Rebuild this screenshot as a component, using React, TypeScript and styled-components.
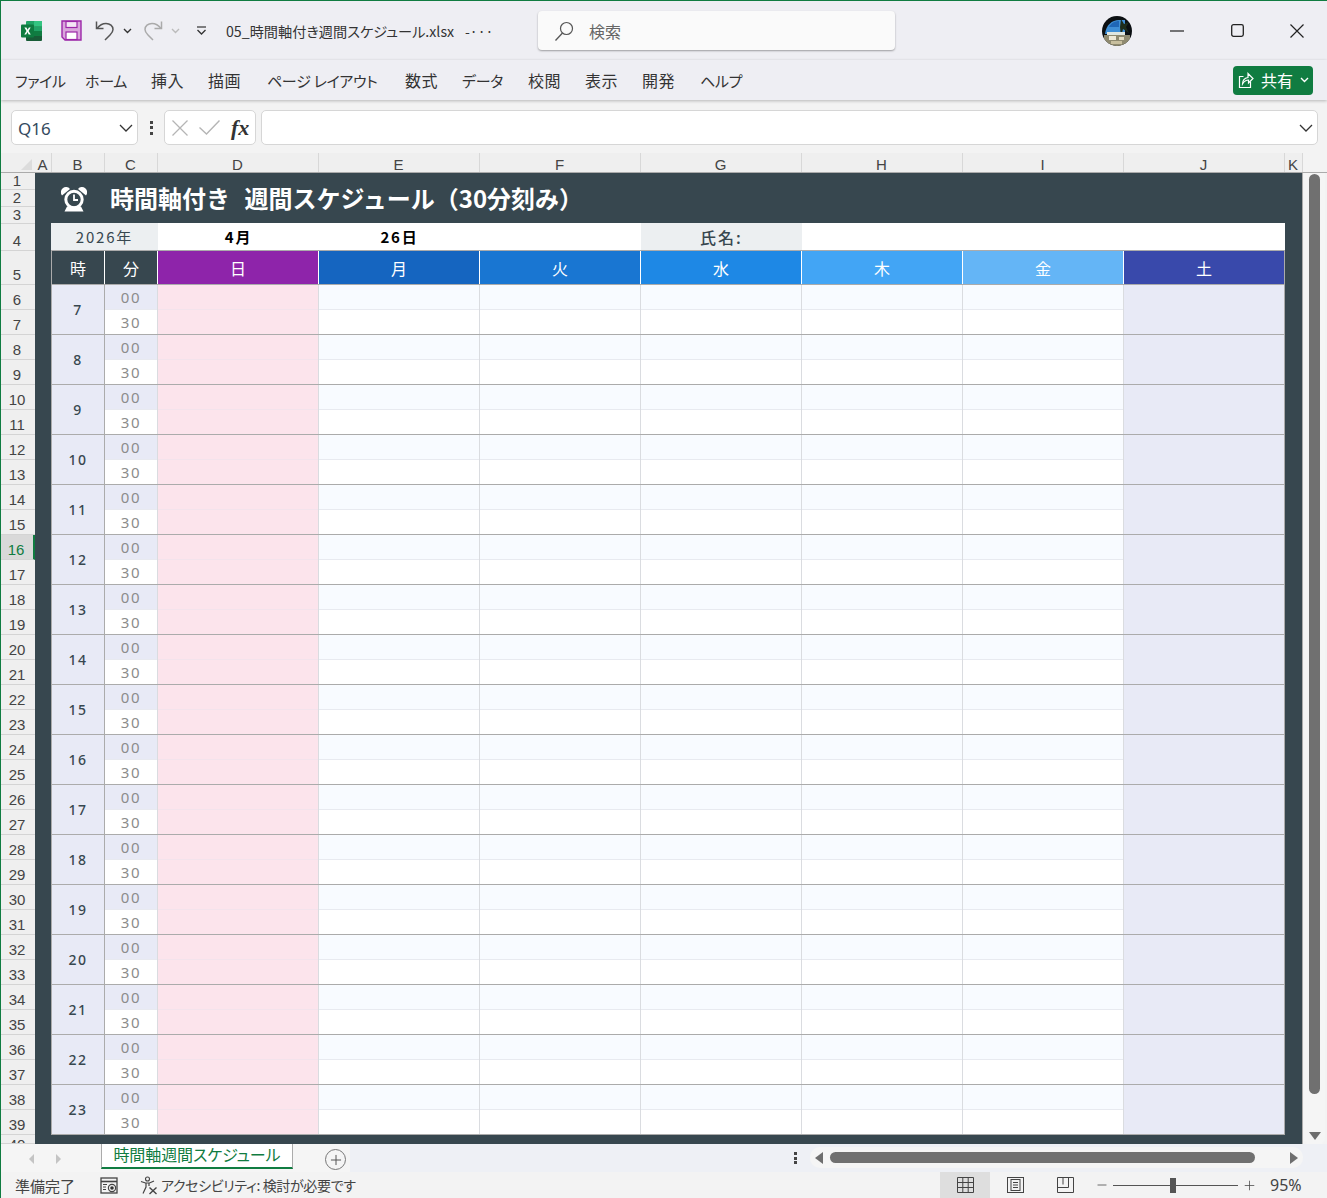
import styled, { createGlobalStyle } from "styled-components";
import { Minus, Plus } from "lucide-react";

const JP = `"Noto Sans CJK JP", "Noto Sans", sans-serif`;
const COLS = "54px 53px repeat(7, 161px)";

const GlobalStyle = createGlobalStyle`
  * { box-sizing: border-box; }
  html, body { margin: 0; padding: 0; background: #f3f3f3; }
  body { font-family: ${JP}; font-feature-settings: "palt"; }
`;

const columns = [
  { name: "A", width: 17 },
  { name: "B", width: 53 },
  { name: "C", width: 53 },
  { name: "D", width: 161 },
  { name: "E", width: 161 },
  { name: "F", width: 161 },
  { name: "G", width: 161 },
  { name: "H", width: 161 },
  { name: "I", width: 161 },
  { name: "J", width: 161 },
  { name: "K", width: 18 },
];

const days = [
  { label: "日", color: "#8e24aa" },
  { label: "月", color: "#1565c0" },
  { label: "火", color: "#1976d2" },
  { label: "水", color: "#1e88e5" },
  { label: "木", color: "#42a5f5" },
  { label: "金", color: "#64b5f6" },
  { label: "土", color: "#3949ab" },
];

const menus = [
  { label: "ファイル", width: 70, kana: true },
  { label: "ホーム", width: 66, kana: true },
  { label: "挿入", width: 57 },
  { label: "描画", width: 59 },
  { label: "ページ レイアウト", width: 138, kana: true },
  { label: "数式", width: 57 },
  { label: "データ", width: 66, kana: true },
  { label: "校閲", width: 57 },
  { label: "表示", width: 57 },
  { label: "開発", width: 58 },
  { label: "ヘルプ", width: 60, kana: true },
];

const hours = Array.from({ length: 17 }, (_, i) => i + 7);

const rowHeights = [17, 17, 17, 27, 34, ...Array.from({ length: 34 }, () => 25), 9];

const ExcelLogo = () => (
  <svg width="21" height="20" viewBox="0 0 21 20">
    <path d="M6 0h14a1 1 0 0 1 1 1v4.500H5V1a1 1 0 0 1 1-1z" fill="#21a366" />
    <rect x="13" y="0" width="8" height="5.500" rx="1" fill="#33c481" />
    <rect x="5" y="5.500" width="16" height="4.500" fill="#107c41" />
    <rect x="13" y="5.500" width="8" height="4.500" fill="#21a366" />
    <rect x="5" y="10" width="16" height="5" fill="#185c37" />
    <rect x="13" y="10" width="8" height="5" fill="#107c41" />
    <path d="M5 15h16v4a1 1 0 0 1-1 1H6a1 1 0 0 1-1-1z" fill="#185c37" />
    <rect x="0" y="3.500" width="13" height="13" rx="1" fill="#0f7b40" />
    <path d="M3.400 6.500h2l1.200 2.300 1.300-2.300h1.800l-2.100 3.500 2.200 3.500H7.700l-1.200-2.400-1.300 2.400H3.300l2.200-3.500z" fill="#fff" />
  </svg>
);

const SaveIcon = () => (
  <svg width="21" height="21" viewBox="0 0 21 21">
    <path d="M1 1h19v19H4l-3-3z" fill="#d9a6dc" stroke="#9c27a8" strokeWidth="1.400" />
    <rect x="5" y="1.500" width="11" height="6" fill="#f4e6f5" stroke="#9c27a8" strokeWidth="1.200" />
    <rect x="5" y="12" width="11" height="7.500" fill="#fff" stroke="#9c27a8" strokeWidth="1.200" />
  </svg>
);

const UndoIcon = ({ color, flip }: { color: string; flip?: boolean }) => (
  <svg width="20" height="21" viewBox="0 0 20 21" style={flip ? { transform: "scaleX(-1)" } : undefined}>
    <path d="M1.500 1.500v7h7" fill="none" stroke={color} strokeWidth="1.500" />
    <path d="M2 8.500C5 4.500 8 3.500 11 3.500c4 0 7 2.500 7 6 0 2.500-1.500 4-3 5.500l-5 5" fill="none" stroke={color} strokeWidth="1.500" />
  </svg>
);

const SmallChevron = ({ color }: { color: string }) => (
  <svg width="9" height="6" viewBox="0 0 9 6">
    <path d="M1 1l3.500 3.500L8 1" fill="none" stroke={color} strokeWidth="1.400" />
  </svg>
);

const BoxChevron = () => (
  <svg width="14" height="8" viewBox="0 0 14 8">
    <path d="M1 1l6 6 6-6" fill="none" stroke="#333" strokeWidth="1.300" />
  </svg>
);

const QatMore = () => (
  <svg width="11" height="10" viewBox="0 0 11 10">
    <path d="M1 1h9" stroke="#333" strokeWidth="1.200" />
    <path d="M1.500 4l4 4 4-4" fill="none" stroke="#333" strokeWidth="1.300" />
  </svg>
);

const LensIcon = () => (
  <svg width="20" height="20" viewBox="0 0 20 20">
    <circle cx="12.500" cy="7.500" r="6" fill="none" stroke="#555" strokeWidth="1.200" />
    <path d="M8.500 12L1.500 19.500" fill="none" stroke="#555" strokeWidth="1.300" />
  </svg>
);

const Avatar = () => (
  <svg width="30" height="30" viewBox="0 0 30 30">
    <defs>
      <clipPath id="avatarClip">
        <circle cx="15" cy="15" r="15" />
      </clipPath>
    </defs>
    <g clipPath="url(#avatarClip)">
      <rect width="30" height="30" fill="#0b0f12" />
      <path d="M3 18C4 9 10 4 17 4h6v14z" fill="#3f8fd6" />
      <path d="M7 11c2-4 6-6 10-6v6z" fill="#1f66b5" />
      <path d="M19 3l3 5 5-2-3 5 3 6-6-4-2 8-1-10z" fill="#1e2d1c" />
      <rect x="5" y="16" width="18" height="3" fill="#dfe6e0" />
      <rect x="2" y="19" width="26" height="11" fill="#8f8a70" />
      <rect x="7" y="20" width="7" height="4" fill="#efe9d7" />
      <rect x="17" y="21" width="5" height="3" fill="#e4dcc2" />
      <rect x="9" y="25" width="11" height="3" fill="#c8bf9f" />
    </g>
  </svg>
);

const MinimizeIcon = () => (
  <svg width="14" height="14" viewBox="0 0 14 14">
    <path d="M0 7h14" stroke="#222" strokeWidth="1.200" />
  </svg>
);

const MaximizeIcon = () => (
  <svg width="13" height="13" viewBox="0 0 13 13">
    <rect x=".7" y=".7" width="11.600" height="11.600" rx="1.800" fill="none" stroke="#222" strokeWidth="1.300" />
  </svg>
);

const CloseIcon = () => (
  <svg width="14" height="14" viewBox="0 0 14 14">
    <path d="M.5.500l13 13M13.500.500l-13 13" stroke="#222" strokeWidth="1.200" />
  </svg>
);

const CrossIcon = () => (
  <svg width="16" height="16" viewBox="0 0 16 16">
    <path d="M.5.500l15 15M15.500.500l-15 15" stroke="#b5b5b5" strokeWidth="1.300" />
  </svg>
);

const CheckIcon = () => (
  <svg width="21" height="15" viewBox="0 0 21 15">
    <path d="M.5 7.500l7 6.500L20.500.500" fill="none" stroke="#b5b5b5" strokeWidth="1.400" />
  </svg>
);

const ShareIcon = () => (
  <svg width="16" height="17" viewBox="0 0 16 17">
    <path d="M5.500 4.500H1.500v11h11v-6" fill="none" stroke="#fff" strokeWidth="1.200" />
    <path d="M4.500 12c0-4 2.500-6 5.500-6.500V1.500L15 6.500l-4.500 4.500V8C8 8 6 9.500 4.500 12z" fill="none" stroke="#fff" strokeWidth="1.200" />
  </svg>
);

const AlarmIcon = () => (
  <svg width="26" height="26" viewBox="0 0 26 26">
    <path d="M1 9.500a5 5 0 0 1 8-6.500zM25 9.500a5 5 0 0 0-8-6.500z" fill="#fff" />
    <circle cx="13" cy="13.500" r="8.200" fill="none" stroke="#fff" strokeWidth="3" />
    <path d="M13 8.500v5.500h4" fill="none" stroke="#fff" strokeWidth="1.800" />
    <path d="M6 20.500L3.500 25.500h19L20 20.500z" fill="#fff" />
  </svg>
);

const MacroIcon = () => (
  <svg width="18" height="17" viewBox="0 0 18 17">
    <rect x="1" y="1" width="16" height="15" fill="none" stroke="#444" strokeWidth="1.300" />
    <path d="M1 4.500h16" stroke="#444" strokeWidth="1.600" />
    <path d="M3 7.500h4M3 10h3M3 12.500h3" stroke="#444" strokeWidth="1" />
    <circle cx="12" cy="11" r="3.600" fill="#f3f3f3" stroke="#444" strokeWidth="1.200" />
    <circle cx="12" cy="11" r="1.800" fill="#333" />
  </svg>
);

const AccessIcon = () => (
  <svg width="18" height="19" viewBox="0 0 18 19">
    <circle cx="7.500" cy="3" r="2" fill="none" stroke="#444" strokeWidth="1.100" />
    <path d="M1 5.500l4.500 1.500h4L14 5M6 7v4l-3 6.500M9 7v3" fill="none" stroke="#444" strokeWidth="1.200" />
    <path d="M9.500 11.500l7 6.500M16.500 11.500l-7 6.500" fill="none" stroke="#444" strokeWidth="1.400" />
  </svg>
);

const NormalViewIcon = () => (
  <svg width="17" height="16" viewBox="0 0 17 16">
    <path d="M.5.500h16v15H.5zM.5 5.500h16M.5 10.500h16M5.800.500v15M11.200.500v15" fill="none" stroke="#444" strokeWidth="1" />
  </svg>
);

const PageViewIcon = () => (
  <svg width="17" height="16" viewBox="0 0 17 16">
    <rect x=".5" y=".5" width="16" height="15" fill="none" stroke="#444" />
    <rect x="4" y="2.500" width="9" height="11" fill="none" stroke="#444" />
    <path d="M6 5.500h5M6 8h5M6 10.500h5" stroke="#444" />
  </svg>
);

const BreakViewIcon = () => (
  <svg width="17" height="16" viewBox="0 0 17 16">
    <path d="M.5.500h16v15H.5zM.5 10.500h11V.500M6 .500v7" fill="none" stroke="#444" />
  </svg>
);

const App = () => {
  return (
    <Win>
      <GlobalStyle />
      <TitleBar>
        <QatGroup>
          <QatSlot $w={38}><ExcelLogo /></QatSlot>
          <QatSlot $w={42}><SaveIcon /></QatSlot>
          <QatSlot $w={26}><UndoIcon color="#555" /></QatSlot>
          <QatSlot $w={18}><SmallChevron color="#333" /></QatSlot>
          <QatSlot $w={34}><UndoIcon color="#aaa" flip /></QatSlot>
          <QatSlot $w={10}><SmallChevron color="#bbb" /></QatSlot>
          <QatSlot $w={42}><QatMore /></QatSlot>
        </QatGroup>
        <FileName>05_時間軸付き週間スケジュール.xlsx</FileName>
        <FileMore>-···</FileMore>
        <SearchBox>
          <LensIcon />
          <SearchText>検索</SearchText>
        </SearchBox>
        <WindowControls>
          <Avatar />
          <WinButton $ml={15}><MinimizeIcon /></WinButton>
          <WinButton $ml={0}><MaximizeIcon /></WinButton>
          <WinButton $ml={0}><CloseIcon /></WinButton>
        </WindowControls>
      </TitleBar>

      <MenuBar>
        <MenuList>
          {menus.map((m) => (
            <MenuItem key={m.label} $w={m.width} $kana={m.kana}>{m.label}</MenuItem>
          ))}
        </MenuList>
        <ShareButton>
          <ShareIcon />
          <span>共有</span>
          <SmallChevron color="#fff" />
        </ShareButton>
      </MenuBar>

      <FormulaBar>
        <NameBox>
          <NameText>Q16</NameText>
          <BoxChevron />
        </NameBox>
        <DotsV $h={14}>
          <i /><i /><i />
        </DotsV>
        <FxBox>
          <CrossIcon />
          <CheckIcon />
          <FxText>fx</FxText>
        </FxBox>
        <FormulaInput>
          <BoxChevron />
        </FormulaInput>
      </FormulaBar>

      <ColHeader>
        <Corner />
        {columns.map((c) => (
          <ColCell key={c.name} $w={c.width}>{c.name}</ColCell>
        ))}
        <ColHeadGap />
      </ColHeader>

      <SheetArea>
        <RowHeader>
          {rowHeights.map((h, i) => (
            <RowCell key={i} $h={h} $active={i + 1 === 16}>{i + 1}</RowCell>
          ))}
        </RowHeader>

        <Sheet>
          <SheetTitle>
            <AlarmIcon />
            <TitleText>時間軸付き 週間スケジュール（30分刻み）</TitleText>
          </SheetTitle>

          <InfoRow>
            <YearCell>2026年</YearCell>
            <InfoValue>4月</InfoValue>
            <InfoValue>26日</InfoValue>
            <InfoValue />
            <NameLabel>氏名:</NameLabel>
            <InfoValue />
            <InfoValue />
            <InfoValue />
          </InfoRow>

          <Table>
            <HeadRow>
              <HeadCell $bg="#37474f">時</HeadCell>
              <HeadCell $bg="#37474f">分</HeadCell>
              {days.map((d) => (
                <HeadCell key={d.label} $bg={d.color}>{d.label}</HeadCell>
              ))}
            </HeadRow>
            {hours.map((h) => (
              <HourRow key={h}>
                <HourCell>{h}</HourCell>
                <MinuteCol>
                  <MinuteCell $first>00</MinuteCell>
                  <MinuteCell>30</MinuteCell>
                </MinuteCol>
                <SunCol>
                  <SunHalf />
                  <SunHalf />
                </SunCol>
                {[0, 1, 2, 3, 4].map((d) => (
                  <DayCol key={d}>
                    <DayHalf $first />
                    <DayHalf />
                  </DayCol>
                ))}
                <SatCol />
              </HourRow>
            ))}
          </Table>
        </Sheet>

        <VScroll>
          <ArrowUp />
          <VThumb />
          <ArrowDown />
        </VScroll>
      </SheetArea>

      <TabBar>
        <TabNav>
          <NavLeft />
          <NavRight />
        </TabNav>
        <Tab>時間軸週間スケジュール</Tab>
        <AddSheet>
          <Plus size={16} strokeWidth={1.500} color="#555" />
        </AddSheet>
        <TabFill />
        <DotsV $h={12}>
          <i /><i /><i />
        </DotsV>
        <HScroll>
          <ArrowLeft />
          <HThumb />
          <ArrowRight />
        </HScroll>
      </TabBar>

      <StatusBar>
        <StatusText>準備完了</StatusText>
        <StatusIcon><MacroIcon /></StatusIcon>
        <AccessWrap>
          <AccessIcon />
          <AccessText>アクセシビリティ: 検討が必要です</AccessText>
        </AccessWrap>
        <StatusFill />
        <ViewButton $active><NormalViewIcon /></ViewButton>
        <ViewButton><PageViewIcon /></ViewButton>
        <ViewButton><BreakViewIcon /></ViewButton>
        <ZoomSign><Minus size={14} strokeWidth={1.300} color="#444" /></ZoomSign>
        <ZoomTrack>
          <ZoomKnob />
        </ZoomTrack>
        <ZoomSign><Plus size={15} strokeWidth={1.200} color="#444" /></ZoomSign>
        <ZoomValue>95%</ZoomValue>
      </StatusBar>
    </Win>
  );
};

export default App;

const Win = styled.div`
  width: 1327px;
  height: 1198px;
  display: flex;
  flex-direction: column;
  border-top: 1px solid #107c41;
  border-left: 1px solid #107c41;
  background: #f3f3f3;
  overflow: hidden;
`;

const TitleBar = styled.div`
  height: 59px;
  display: flex;
  align-items: center;
  background: #eeeef3;
  padding-left: 11px;
`;

const QatGroup = styled.div`
  display: flex;
  align-items: center;
`;

const QatSlot = styled.div<{ $w: number }>`
  width: ${(p) => p.$w}px;
  display: flex;
  justify-content: center;
  align-items: center;
`;

const FileName = styled.div`
  margin-left: 4px;
  font-size: 14.200px;
  color: #333;
  white-space: nowrap;
  width: 230px;
`;

const FileMore = styled.div`
  margin-left: 9px;
  font-size: 14px;
  color: #333;
  width: 73px;
`;

const SearchBox = styled.div`
  width: 357px;
  height: 39px;
  display: flex;
  align-items: center;
  gap: 15px;
  padding-left: 16px;
  background: #fafafa;
  border-radius: 4px;
  box-shadow: 0 1px 2px rgba(0, 0, 0, 0.35);
`;

const SearchText = styled.span`
  font-size: 16px;
  color: #666;
`;

const WindowControls = styled.div`
  margin-left: auto;
  display: flex;
  align-items: center;
`;

const WinButton = styled.div<{ $ml: number }>`
  width: 60px;
  margin-left: ${(p) => p.$ml}px;
  display: flex;
  justify-content: center;
  align-items: center;
`;

const MenuBar = styled.div`
  height: 40px;
  display: flex;
  align-items: center;
  justify-content: space-between;
  padding: 0 14px;
  background: #eeeef3;
  box-shadow: 0 1px 3px rgba(0, 0, 0, 0.25);
  position: relative;
  z-index: 1;
`;

const MenuList = styled.div`
  display: flex;
  align-items: baseline;
`;

const MenuItem = styled.span<{ $w: number; $kana?: boolean }>`
  width: ${(p) => p.$w}px;
  font-size: ${(p) => (p.$kana ? 15 : 16)}px;
  letter-spacing: ${(p) => (p.$kana ? "-0.3px" : "0.5px")};
  color: #333;
  white-space: nowrap;
`;

const ShareButton = styled.div`
  width: 80px;
  height: 29px;
  display: flex;
  align-items: center;
  justify-content: space-between;
  padding: 0 4px 0 5px;
  background: #107c41;
  border-radius: 4px;
  color: #fff;
  font-size: 16px;
`;

const FormulaBar = styled.div`
  height: 53px;
  display: flex;
  align-items: center;
  padding: 10px 9px 8px 10px;
  background: #f3f3f3;
`;

const NameBox = styled.div`
  width: 127px;
  height: 35px;
  display: flex;
  align-items: center;
  justify-content: space-between;
  padding: 0 4px 0 6px;
  background: #fff;
  border: 1px solid #d6d6d6;
  border-radius: 5px;
`;

const NameText = styled.span`
  font-family: "Noto Sans", sans-serif;
  font-size: 17px;
  padding-top: 2px;
  color: #34495e;
`;

const DotsV = styled.div<{ $h: number }>`
  width: 26px;
  height: ${(p) => p.$h}px;
  align-self: center;
  display: flex;
  flex-direction: column;
  justify-content: space-between;
  align-items: center;

  i {
    display: block;
    width: 3px;
    height: 3px;
    background: #444;
  }
`;

const FxBox = styled.div`
  width: 92px;
  height: 35px;
  display: flex;
  align-items: center;
  gap: 11px;
  padding-left: 7px;
  background: #fff;
  border: 1px solid #d6d6d6;
  border-radius: 5px;
`;

const FxText = styled.span`
  font-family: "Liberation Serif", serif;
  font-style: italic;
  font-weight: 700;
  font-size: 22px;
  line-height: 1;
  color: #333;
`;

const FormulaInput = styled.div`
  flex: 1;
  height: 35px;
  margin-left: 5px;
  display: flex;
  align-items: center;
  justify-content: flex-end;
  padding-right: 4px;
  background: #fff;
  border: 1px solid #d6d6d6;
  border-radius: 5px;
`;

const ColHeader = styled.div`
  height: 20px;
  display: flex;
  background: #efefef;
  border-bottom: 1px solid #ababab;
`;

const Corner = styled.div`
  width: 34px;
  position: relative;

  &::after {
    content: "";
    position: absolute;
    right: 3px;
    bottom: 2px;
    border-left: 11px solid transparent;
    border-bottom: 11px solid #dcdcdc;
  }
`;

const ColCell = styled.div<{ $w: number }>`
  width: ${(p) => p.$w}px;
  display: flex;
  align-items: center;
  justify-content: center;
  padding: 5px 1px 0 0;
  border-right: 1px solid #d8d8d8;
  font-family: "Liberation Sans", sans-serif;
  font-size: 15px;
  line-height: 16px;
  color: #444;
`;

const ColHeadGap = styled.div`
  flex: 1;
  background: #f3f3f3;
`;

const SheetArea = styled.div`
  height: 971px;
  display: flex;
  overflow: hidden;
`;

const RowHeader = styled.div`
  width: 34px;
  flex: none;
  background: #efefef;
`;

const RowCell = styled.div<{ $h: number; $active?: boolean }>`
  height: ${(p) => p.$h}px;
  display: flex;
  align-items: ${(p) => (p.$h < 10 ? "flex-start" : "flex-end")};
  justify-content: center;
  overflow: hidden;
  font-family: "Liberation Sans", sans-serif;
  font-size: 15px;
  line-height: 16px;
  padding: ${(p) => (p.$h < 10 ? "2px 2px 0 0" : p.$h > 17 ? "0 2px 1px 0" : "0 2px 0 0")};
  color: ${(p) => (p.$active ? "#107c41" : "#444")};
  background: ${(p) => (p.$active ? "#d9d9d9" : "transparent")};
  border-bottom: 1px solid #d4d4d4;
  border-right: ${(p) => (p.$active ? "2px solid #107c41" : "0")};
`;

const Sheet = styled.div`
  width: 1268px;
  flex: none;
  padding-left: 16px;
  background: #37474f;
  border-right: 1px solid #ababab;
`;

const SheetTitle = styled.div`
  height: 50px;
  display: flex;
  align-items: center;
  padding: 2px 0 0 10px;
`;

const TitleText = styled.span`
  margin-left: 23px;
  padding-bottom: 4px;
  font-size: 24px;
  font-weight: 700;
  font-feature-settings: normal;
  word-spacing: 9px;
  color: #fff;
  white-space: nowrap;
`;

const InfoRow = styled.div`
  display: grid;
  grid-template-columns: 107px repeat(7, 161px);
  height: 27px;
  width: 1234px;
  background: #fff;
`;

const YearCell = styled.div`
  display: flex;
  align-items: center;
  justify-content: center;
  background: #eceff1;
  color: #37474f;
  font-size: 15px;
  letter-spacing: 1.800px;
`;

const InfoValue = styled.div`
  display: flex;
  align-items: center;
  justify-content: center;
  font-size: 15px;
  font-weight: 700;
  letter-spacing: 1.800px;
  color: #000;
`;

const NameLabel = styled.div`
  display: flex;
  align-items: center;
  justify-content: center;
  background: #eceff1;
  color: #37474f;
  font-size: 16px;
  font-weight: 500;
  letter-spacing: 2px;
`;

const Table = styled.div`
  width: 1234px;
`;

const HeadRow = styled.div`
  display: grid;
  grid-template-columns: ${COLS};
  height: 35px;
  border-top: 1px solid #ababab;
  border-bottom: 1px solid #ababab;
`;

const HeadCell = styled.div<{ $bg: string }>`
  display: flex;
  align-items: center;
  justify-content: center;
  background: ${(p) => p.$bg};
  color: #fff;
  font-size: 16px;
  border-right: 1px solid #fff;

  &:first-child {
    width: 54px;
    border-left: 1px solid #ababab;
  }

  &:last-child {
    border-right: 1px solid #ababab;
  }
`;

const HourRow = styled.div`
  display: grid;
  grid-template-columns: ${COLS};
  height: 50px;
  border-bottom: 1px solid #ababab;
`;

const HourCell = styled.div`
  display: flex;
  align-items: center;
  justify-content: center;
  background: #e8eaf6;
  border-left: 1px solid #ababab;
  border-right: 1px solid #ababab;
  font-family: "Noto Sans", sans-serif;
  font-size: 14px;
  font-weight: 500;
  letter-spacing: 1.400px;
  color: #37474f;
`;

const MinuteCol = styled.div`
  display: flex;
  flex-direction: column;
  border-right: 1px solid #dadce0;
`;

const MinuteCell = styled.div<{ $first?: boolean }>`
  flex: 1;
  display: flex;
  align-items: center;
  justify-content: center;
  background: ${(p) => (p.$first ? "#e8eaf6" : "#fff")};
  font-family: "Noto Sans", sans-serif;
  font-size: 15px;
  letter-spacing: 1.600px;
  color: #8c8c8c;
  border-bottom: ${(p) => (p.$first ? "1px solid #e8eaf0" : "0")};
`;

const SunCol = styled.div`
  display: flex;
  flex-direction: column;
  background: #fce4ec;
  border-right: 1px solid #dadce0;
`;

const SunHalf = styled.div`
  flex: 1;

  &:first-child {
    border-bottom: 1px solid #f3e3ec;
  }
`;

const DayCol = styled.div`
  display: flex;
  flex-direction: column;
  border-right: 1px solid #dadce0;
`;

const DayHalf = styled.div<{ $first?: boolean }>`
  flex: 1;
  background: ${(p) => (p.$first ? "#f8fbff" : "#fff")};
  border-bottom: ${(p) => (p.$first ? "1px solid #e8eaf0" : "0")};
`;

const SatCol = styled.div`
  background: #e8eaf6;
  border-right: 1px solid #ababab;
`;

const VScroll = styled.div`
  width: 21px;
  flex: none;
  margin: -20px 0 -3px 1px;
  position: relative;
  z-index: 2;
  display: flex;
  flex-direction: column;
  align-items: center;
  background: #f5f5f5;
  border-radius: 10px;
`;

const ArrowUp = styled.div`
  margin-top: 6px;
  border-left: 6px solid transparent;
  border-right: 6px solid transparent;
  border-bottom: 8px solid #6e6e6e;
`;

const VThumb = styled.div`
  width: 11px;
  height: 920px;
  margin-top: 7px;
  background: #707070;
  border-radius: 6px;
`;

const ArrowDown = styled.div`
  margin-top: 38px;
  border-left: 6px solid transparent;
  border-right: 6px solid transparent;
  border-top: 8px solid #6e6e6e;
`;

const TabBar = styled.div`
  height: 28px;
  display: flex;
  align-items: flex-start;
  background: linear-gradient(90deg, #f5f5f5 0 349px, #eef0f5 349px);
`;

const TabNav = styled.div`
  width: 100px;
  height: 30px;
  display: flex;
  align-items: center;
  padding-left: 28px;
  gap: 22px;
`;

const NavLeft = styled.div`
  border-top: 5px solid transparent;
  border-bottom: 5px solid transparent;
  border-right: 5px solid #c4c4c4;
`;

const NavRight = styled.div`
  border-top: 5px solid transparent;
  border-bottom: 5px solid transparent;
  border-left: 5px solid #c4c4c4;
`;

const Tab = styled.div`
  width: 192px;
  height: 25px;
  display: flex;
  align-items: center;
  justify-content: center;
  padding-bottom: 3px;
  background: #fff;
  border-left: 1px solid #ababab;
  border-right: 1px solid #ababab;
  border-bottom: 2px solid #107c41;
  color: #107c41;
  font-size: 16px;
  letter-spacing: -0.1px;
  white-space: nowrap;
`;

const AddSheet = styled.div`
  width: 21px;
  height: 21px;
  margin: 5px 0 0 32px;
  display: flex;
  align-items: center;
  justify-content: center;
  border: 1.500px solid #777;
  border-radius: 50%;
`;

const TabFill = styled.div`
  flex: 1;
`;

const HScroll = styled.div`
  width: 493px;
  height: 21px;
  margin: 3px 24px 0 2px;
  display: flex;
  align-items: center;
  padding-left: 5px;
  background: #f5f5f5;
  border-radius: 10px;
`;

const ArrowLeft = styled.div`
  border-top: 6px solid transparent;
  border-bottom: 6px solid transparent;
  border-right: 8px solid #6e6e6e;
`;

const HThumb = styled.div`
  width: 425px;
  height: 11px;
  margin-left: 7px;
  background: #707070;
  border-radius: 6px;
`;

const ArrowRight = styled.div`
  margin-left: 35px;
  border-top: 6px solid transparent;
  border-bottom: 6px solid transparent;
  border-left: 8px solid #6e6e6e;
`;

const StatusBar = styled.div`
  height: 26px;
  display: flex;
  align-items: center;
  background: #f3f3f3;
  padding-left: 14px;
  font-size: 15px;
  color: #444;
`;

const StatusText = styled.span`
  width: 85px;
`;

const StatusIcon = styled.div`
  width: 40px;
  display: flex;
`;

const AccessWrap = styled.div`
  display: flex;
  align-items: center;
  gap: 3px;
`;

const AccessText = styled.span`
  font-size: 14px;
  letter-spacing: -0.35px;
  white-space: nowrap;
`;

const StatusFill = styled.div`
  flex: 1;
`;

const ViewButton = styled.div<{ $active?: boolean }>`
  width: 50px;
  height: 26px;
  display: flex;
  align-items: center;
  justify-content: center;
  background: ${(p) => (p.$active ? "#dedede" : "transparent")};
`;

const ZoomSign = styled.div`
  width: 15px;
  margin: 0 4px 0 4px;
  display: flex;
  justify-content: center;
`;

const ZoomTrack = styled.div`
  width: 125px;
  height: 1px;
  background: #555;
  position: relative;
`;

const ZoomKnob = styled.div`
  position: absolute;
  left: 57px;
  top: -7px;
  width: 6px;
  height: 15px;
  background: #555;
`;

const ZoomValue = styled.span`
  width: 66px;
  padding-left: 9px;
  font-family: "Noto Sans", sans-serif;
  font-size: 16px;
  color: #444;
`;
